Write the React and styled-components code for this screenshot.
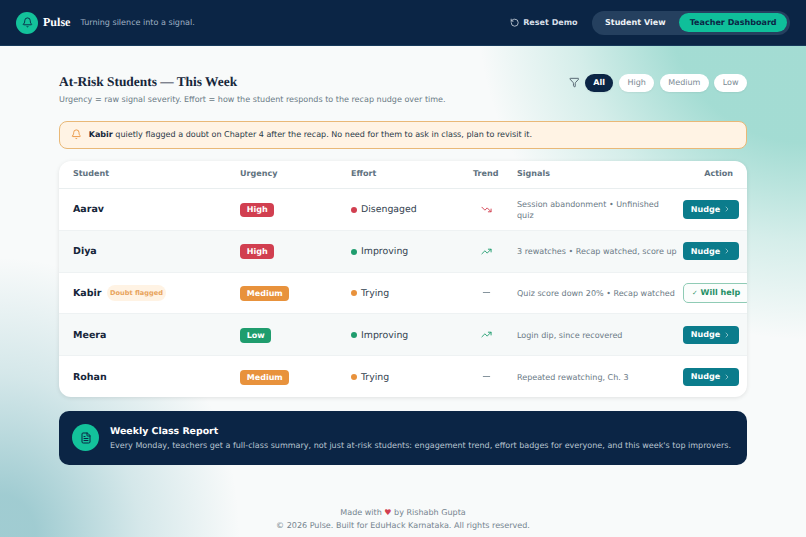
import styled, { createGlobalStyle } from 'styled-components';
import { Bell, RotateCcw, Filter, TrendingDown, TrendingUp, Minus, ChevronRight, FileText } from 'lucide-react';

const students = [
    { name: "Aarav", urgency: "High", effort: "Disengaged", trend: "down", signals: "Session abandonment • Unfinished quiz" },
    { name: "Diya", urgency: "High", effort: "Improving", trend: "up", signals: "3 rewatches • Recap watched, score up" },
    { name: "Kabir", flagged: true, urgency: "Medium", effort: "Trying", trend: "flat", signals: "Quiz score down 20% • Recap watched", helping: true },
    { name: "Meera", urgency: "Low", effort: "Improving", trend: "up", signals: "Login dip, since recovered" },
    { name: "Rohan", urgency: "Medium", effort: "Trying", trend: "flat", signals: "Repeated rewatching, Ch. 3" },
];

const urgencyColors = { High: "#d13f50", Medium: "#e8923c", Low: "#1f9d6e" };
const effortColors = { Disengaged: "#d13f50", Improving: "#1f9d6e", Trying: "#e8923c" };

function TrendIcon({ trend }) {
    if (trend === "up") return <TrendingUp size={11} color="#1f9d6e" strokeWidth={2} />;
    if (trend === "down") return <TrendingDown size={11} color="#d13f50" strokeWidth={2} />;
    return <Minus size={11} color="#7b8a94" strokeWidth={2} />;
}

export default function App() {
    return (
        <Page>
            <GlobalStyle />
            <Header>
                <Brand>
                    <LogoCircle><Bell size={11} color="#0b2545" strokeWidth={2} /></LogoCircle>
                    <BrandName>Pulse</BrandName>
                    <Tagline>Turning silence into a signal.</Tagline>
                </Brand>
                <HeaderActions>
                    <ResetButton><RotateCcw size={9.4} strokeWidth={2} />Reset Demo</ResetButton>
                    <ViewSwitch>
                        <ViewTab>Student View</ViewTab>
                        <ViewTab $active>Teacher Dashboard</ViewTab>
                    </ViewSwitch>
                </HeaderActions>
            </Header>

            <Main>
                <TitleRow>
                    <div>
                        <Title>At-Risk Students — This Week</Title>
                        <Subtitle>Urgency = raw signal severity. Effort = how the student responds to the recap nudge over time.</Subtitle>
                    </div>
                    <Filters>
                        <Filter size={10.7} color="#4a5a66" strokeWidth={2} />
                        <FilterPill $active>All</FilterPill>
                        <FilterPill>High</FilterPill>
                        <FilterPill>Medium</FilterPill>
                        <FilterPill>Low</FilterPill>
                    </Filters>
                </TitleRow>

                <Alert>
                    <Bell size={10.7} color="#e8923c" strokeWidth={2} />
                    <span><strong>Kabir</strong> quietly flagged a doubt on Chapter 4 after the recap. No need for them to ask in class, plan to revisit it.</span>
                </Alert>

                <TableCard>
                    <Table>
                        <colgroup>
                            <col style={{ width: 167 }} />
                            <col style={{ width: 111 }} />
                            <col style={{ width: 122 }} />
                            <col style={{ width: 44 }} />
                            <col style={{ width: 180 }} />
                            <col style={{ width: 64 }} />
                        </colgroup>
                        <thead>
                            <tr>
                                <Th>Student</Th>
                                <Th>Urgency</Th>
                                <Th>Effort</Th>
                                <Th>Trend</Th>
                                <Th>Signals</Th>
                                <Th $right>Action</Th>
                            </tr>
                        </thead>
                        <tbody>
                            {students.map(s => (
                                <Row key={s.name}>
                                    <Td>
                                        <NameCell>
                                            <Name>{s.name}</Name>
                                            {s.flagged && <DoubtTag>Doubt flagged</DoubtTag>}
                                        </NameCell>
                                    </Td>
                                    <Td><UrgencyBadge $color={urgencyColors[s.urgency]}>{s.urgency}</UrgencyBadge></Td>
                                    <Td>
                                        <Effort>
                                            <Dot $color={effortColors[s.effort]} />
                                            {s.effort}
                                        </Effort>
                                    </Td>
                                    <TrendCell><TrendIcon trend={s.trend} /></TrendCell>
                                    <SignalCell>{s.signals}</SignalCell>
                                    <ActionCell>
                                        {s.helping
                                            ? <WillHelp><small>✓</small> Will help</WillHelp>
                                            : <NudgeButton>Nudge <ChevronRight size={8} strokeWidth={2} /></NudgeButton>}
                                    </ActionCell>
                                </Row>
                            ))}
                        </tbody>
                    </Table>
                </TableCard>

                <ReportCard>
                    <ReportIcon><FileText size={12} color="#0b2545" strokeWidth={2} /></ReportIcon>
                    <ReportBody>
                        <ReportTitle>Weekly Class Report</ReportTitle>
                        <ReportText>Every Monday, teachers get a full-class summary, not just at-risk students: engagement trend, effort badges for everyone, and this week's top improvers.</ReportText>
                    </ReportBody>
                </ReportCard>
            </Main>

            <Footer>
                <p>Made with <HeartGlyph>♥</HeartGlyph> by Rishabh Gupta</p>
                <p>© 2026 Pulse. Built for EduHack Karnataka. All rights reserved.</p>
            </Footer>
        </Page>
    );
}

/* --- STYLES --- */
const GlobalStyle = createGlobalStyle`
    * { box-sizing: border-box; }
    html, body { margin: 0; padding: 0; }
    body {
        font-family: "DejaVu Sans", sans-serif;
        color: #16263a;
        text-rendering: geometricPrecision;
    }
    p { margin: 0; }
`;

const Page = styled.div`
    height: 537px;
    overflow: hidden;
    background:
        radial-gradient(ellipse 330px 340px at 100% 0%, rgba(13, 167, 142, 0.36) 0, rgba(13, 167, 142, 0.36) 42%, rgba(13, 167, 142, 0.15) 71%, rgba(13, 167, 142, 0) 100%),
        radial-gradient(ellipse 240px 280px at 0% 100%, rgba(10, 125, 140, 0.37) 0, rgba(10, 125, 140, 0.37) 15%, rgba(10, 125, 140, 0.15) 58%, rgba(10, 125, 140, 0) 100%),
        #f8fafa;
`;

const Header = styled.header`
    height: 46px;
    padding: 0 16px;
    display: flex;
    align-items: center;
    justify-content: space-between;
    background: #0b2545;
    border-bottom: 1px solid #16395a;
`;

const Brand = styled.div`
    display: flex;
    align-items: center;
`;

const LogoCircle = styled.div`
    width: 22px;
    height: 22px;
    border-radius: 50%;
    background: #13c29b;
    display: flex;
    align-items: center;
    justify-content: center;
`;

const BrandName = styled.span`
    margin-left: 5px;
    font-family: "Liberation Serif", serif;
    font-weight: 700;
    font-size: 12.06px;
    color: #fff;
`;

const Tagline = styled.span`
    margin-left: 10px;
    font-size: 8.04px;
    color: #9fb0c2;
`;

const HeaderActions = styled.div`
    display: flex;
    align-items: center;
    gap: 14px;
`;

const ResetButton = styled.div`
    display: flex;
    align-items: center;
    gap: 4px;
    font-size: 8.04px;
    font-weight: 700;
    color: #d7dfe8;
`;

const ViewSwitch = styled.div`
    display: flex;
    align-items: center;
    gap: 2.7px;
    height: 24px;
    padding: 0 2.7px;
    border-radius: 12px;
    background: #25405f;
`;

const ViewTab = styled.div`
    height: 19px;
    padding: 0 10.7px;
    display: flex;
    align-items: center;
    border-radius: 10px;
    font-size: 8.04px;
    font-weight: 700;
    color: ${props => props.$active ? "#0b2545" : "#eef2f6"};
    background: ${props => props.$active ? "#0fbf9a" : "transparent"};
`;

const Main = styled.main`
    width: 688px;
    margin: 0 0 0 59px;
    padding-top: 27px;
`;

const TitleRow = styled.div`
    display: flex;
    justify-content: space-between;
    align-items: flex-start;
`;

const Title = styled.h1`
    margin: 0;
    font-family: "Liberation Serif", serif;
    font-size: 13.4px;
    line-height: 18px;
    font-weight: 700;
    color: #16263a;
`;

const Subtitle = styled.p`
    margin-top: 2px;
    font-size: 8.04px;
    line-height: 14px;
    color: #6b7a86;
`;

const Filters = styled.div`
    margin-top: 1px;
    display: flex;
    align-items: center;
    gap: 5.6px;
`;

const FilterPill = styled.div`
    height: 17.5px;
    padding: 0 8.4px;
    display: flex;
    align-items: center;
    border-radius: 9px;
    font-size: 8.04px;
    font-weight: ${props => props.$active ? 700 : 400};
    color: ${props => props.$active ? "#fff" : "#7b8a94"};
    background: ${props => props.$active ? "#0b2545" : "#fff"};
    box-shadow: 0 1px 2px rgba(0, 0, 0, 0.06);
`;

const Alert = styled.div`
    margin-top: 13.5px;
    height: 28px;
    padding: 0 11px;
    display: flex;
    align-items: center;
    gap: 7px;
    border: 1px solid #e9b877;
    border-radius: 8px;
    background: #fff3e4;
    font-size: 8.04px;
    color: #2b3a48;
    strong { color: #16263a; }
`;

const TableCard = styled.div`
    margin-top: 12px;
    border-radius: 12px;
    background: #fff;
    overflow: hidden;
    box-shadow: 0 1px 4px rgba(0, 0, 0, 0.1);
`;

const Table = styled.table`
    width: 688px;
    table-layout: fixed;
    border-collapse: collapse;
`;

const Th = styled.th`
    height: 28px;
    padding: ${props => props.$right ? "0 14px 1px 0" : "0 0 1px 14px"};
    font-size: 8.04px;
    font-weight: 700;
    color: #5f7280;
    text-align: ${props => props.$right ? "right" : "left"};
    border-bottom: 1px solid #e9eeef;
`;

const Row = styled.tr`
    height: 41.8px;
    border-bottom: 1px solid #eef2f3;
    &:nth-child(even) { background: #f6f9f9; }
    &:last-child { border-bottom: none; }
`;

const Td = styled.td`
    padding: 1px 14px 0;
    vertical-align: middle;
`;

const NameCell = styled.div`
    display: flex;
    align-items: center;
    gap: 5px;
`;

const Name = styled.span`
    font-size: 9.5px;
    font-weight: 700;
    color: #16263a;
`;

const DoubtTag = styled.span`
    height: 16px;
    padding: 0 3.5px;
    display: flex;
    align-items: center;
    border-radius: 8px;
    background: #fff3e4;
    font-size: 6.6px;
    font-weight: 700;
    color: #e8a35c;
    white-space: nowrap;
`;

const UrgencyBadge = styled.span`
    display: flex;
    align-items: center;
    width: fit-content;
    padding: 0 6.7px;
    height: 14.6px;
    border-radius: 4px;
    font-size: 8.04px;
    font-weight: 700;
    color: #fff;
    background: ${props => props.$color};
`;

const Effort = styled.div`
    display: flex;
    align-items: center;
    gap: 4px;
    font-size: 9.38px;
    color: #33424f;
    white-space: nowrap;
`;

const Dot = styled.span`
    width: 6px;
    height: 6px;
    border-radius: 50%;
    background: ${props => props.$color};
`;

const TrendCell = styled.td`
    padding: 0 0 0 10px;
    svg { display: block; margin: 0 auto; }
`;

const SignalCell = styled.td`
    padding: 1px 5.2px 0 14px;
    font-size: 8.04px;
    line-height: 11px;
    color: #6b7a86;
`;

const ActionCell = styled.td`
    padding: 0;
    white-space: nowrap;
`;

const NudgeButton = styled.div`
    width: 56px;
    height: 18.5px;
    display: flex;
    align-items: center;
    justify-content: center;
    gap: 3px;
    border-radius: 4px;
    background: #0b7c8c;
    font-size: 8.04px;
    font-weight: 700;
    color: #fff;
    svg { opacity: 0.75; }
`;

const WillHelp = styled.div`
    width: 68px;
    height: 20px;
    padding-left: 8px;
    display: flex;
    align-items: center;
    gap: 3px;
    border: 1px solid #8fcbb5;
    border-radius: 5px;
    background: #fbfdfc;
    font-size: 8.04px;
    font-weight: 700;
    color: #1f8f65;
    small { font-size: 6.7px; font-weight: 400; }
`;

const ReportCard = styled.div`
    margin-top: 13.5px;
    height: 54px;
    padding: 0 13px;
    display: flex;
    align-items: center;
    gap: 11px;
    border-radius: 10px;
    background: #0b2545;
`;

const ReportIcon = styled.div`
    flex-shrink: 0;
    width: 27px;
    height: 27px;
    border-radius: 50%;
    background: #13c29b;
    display: flex;
    align-items: center;
    justify-content: center;
`;

const ReportBody = styled.div`
    padding-top: 3px;
`;

const ReportTitle = styled.div`
    font-size: 9.38px;
    line-height: 14px;
    font-weight: 700;
    color: #fff;
`;

const ReportText = styled.p`
    font-size: 8.04px;
    line-height: 14px;
    color: #b8c4d0;
    white-space: nowrap;
`;

const Footer = styled.footer`
    margin-top: 41px;
    text-align: center;
    font-size: 8.04px;
    line-height: 13.4px;
    color: #75848f;
`;

const HeartGlyph = styled.span`
    color: #d13f50;
`;
